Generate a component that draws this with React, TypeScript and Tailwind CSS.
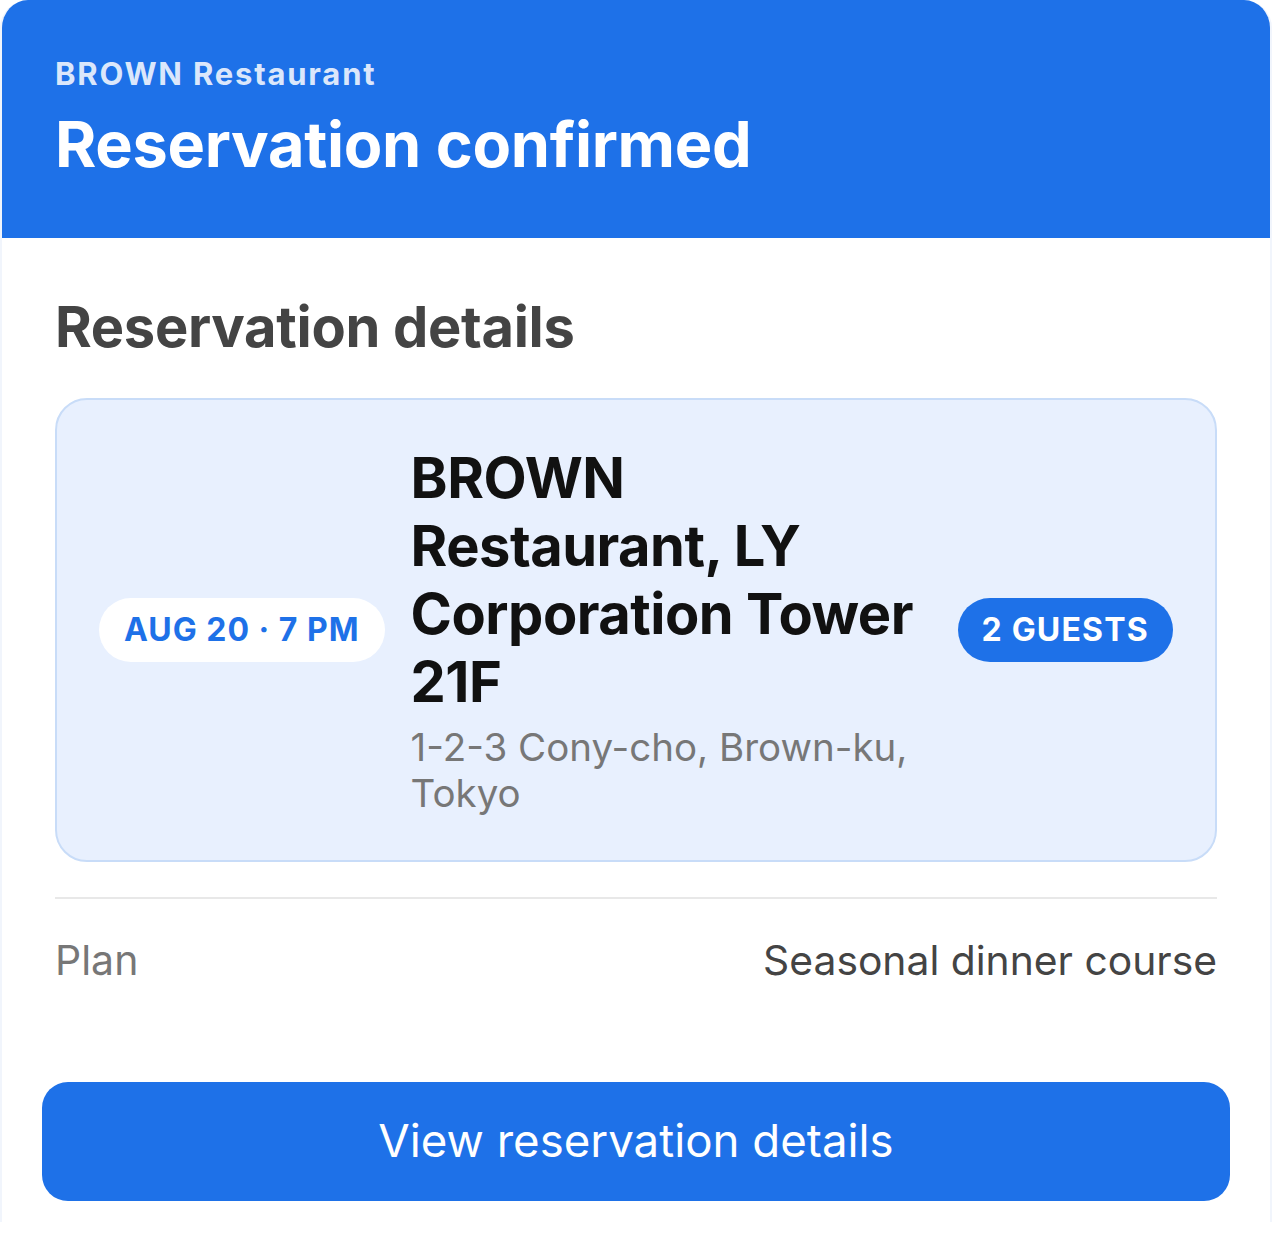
import React from "react";

export default function App() {
  return (
    <div className="w-[1272px] h-[1243px] bg-white" style={{ fontFamily: "Inter, 'Noto Sans', sans-serif" }}>
      <div className="w-[1272px] h-[1222px] rounded-t-[28px] border-x-2 border-[#f1f5fc] overflow-hidden flex flex-col bg-white">
        <div className="bg-[#1e71e8] h-[238px] -mx-[2px] px-[55px] pt-[52px] flex flex-col">
          <div className="text-[31px] leading-[44px] font-bold text-[#dbe7fb] tracking-[1.8px]">BROWN Restaurant</div>
          <div className="text-[63px] leading-[78px] font-bold text-white tracking-[-0.3px] mt-[9px]">Reservation confirmed</div>
        </div>
        <div className="px-[53px] pt-[55px] flex flex-col">
          <div className="text-[56px] leading-[68px] font-bold text-[#444444] tracking-[-0.3px]">Reservation details</div>
          <div className="mt-[37px] bg-[#e8f0fe] border-2 border-[#c8dcf8] rounded-[32px] pl-[42px] pr-[42px] pt-[44px] pb-[44px] flex items-center gap-[26px]">
            <div className="shrink-0 bg-white rounded-full h-[64px] px-[25px] flex items-center text-[32px] font-bold text-[#1e71e8] tracking-[1px]">AUG 20 · 7 PM</div>
            <div className="flex-1 flex flex-col min-w-0">
              <div className="text-[56px] leading-[68px] font-bold text-[#111111] tracking-[-0.5px]">BROWN Restaurant, LY Corporation Tower 21F</div>
              <div className="text-[38.5px] leading-[46px] text-[#777777] mt-[8px]">1-2-3 Cony-cho, Brown-ku, Tokyo</div>
            </div>
            <div className="shrink-0 bg-[#1e71e8] rounded-full h-[64px] px-[24px] flex items-center text-[32px] font-bold text-white tracking-[1.2px]">2 GUESTS</div>
          </div>
          <div className="mt-[35px] h-[2px] bg-[#e8e8e8]" />
          <div className="flex justify-between items-center h-[124px]">
            <div className="text-[41px] text-[#777777]">Plan</div>
            <div className="text-[40.8px] text-[#444444]">Seasonal dinner course</div>
          </div>
        </div>
        <div className="px-[40px] pt-[59px]">
          <div className="h-[119px] rounded-[26px] bg-[#1e71e8] flex items-center justify-center text-[45.6px] text-white">View reservation details</div>
        </div>
      </div>
    </div>
  );
}
